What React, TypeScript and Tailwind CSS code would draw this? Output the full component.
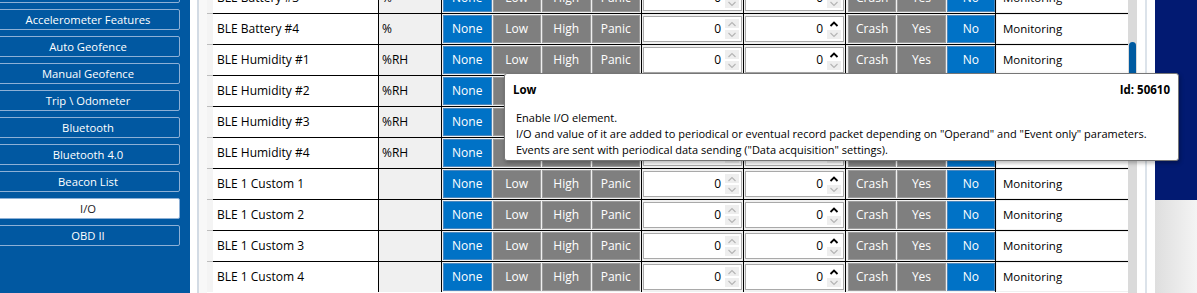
import React from "react"

const MENU = [
  "Features",
  "Accelerometer Features",
  "Auto Geofence",
  "Manual Geofence",
  "Trip \\ Odometer",
  "Bluetooth",
  "Bluetooth 4.0",
  "Beacon List",
  "I/O",
  "OBD II",
]

const ROWS = [
  { name: "BLE Battery #3", unit: "%" },
  { name: "BLE Battery #4", unit: "%" },
  { name: "BLE Humidity #1", unit: "%RH" },
  { name: "BLE Humidity #2", unit: "%RH" },
  { name: "BLE Humidity #3", unit: "%RH" },
  { name: "BLE Humidity #4", unit: "%RH" },
  { name: "BLE 1 Custom 1", unit: "" },
  { name: "BLE 1 Custom 2", unit: "" },
  { name: "BLE 1 Custom 3", unit: "" },
  { name: "BLE 1 Custom 4", unit: "" },
]

function Caret({ down = false, dark = false }: { down?: boolean; dark?: boolean }) {
  return (
    <svg width="10" height="6" viewBox="0 0 10 6" className={down ? "rotate-180" : ""}>
      <path
        d="M1.5 5 L5 1.5 L8.5 5"
        fill="none"
        stroke={dark ? "#000" : "#b5b5b5"}
        strokeWidth={dark ? 1.8 : 1.2}
      />
    </svg>
  )
}

function NumBox({ activeUp = false }: { activeUp?: boolean }) {
  return (
    <div className="h-[26px] flex-1 bg-white border border-[#a9a9a9] flex items-center justify-end">
      <span className="text-[12px] text-black mr-[4px]">0</span>
      <div className="flex flex-col gap-[2px] mr-[2px] w-[14px]">
        <div className={activeUp ? "h-[9px] flex items-center justify-center" : "h-[9px] bg-[#eeeeee] flex items-center justify-center"}>
          <Caret dark={activeUp} />
        </div>
        <div className="h-[9px] bg-[#eeeeee] flex items-center justify-center">
          <Caret down />
        </div>
      </div>
    </div>
  )
}

function Seg({ label, on }: { label: string; on?: boolean }) {
  return (
    <div
      className={
        on
          ? "flex-1 bg-[#0072c6] border border-[#4a88bf] text-white text-[12px] flex items-center justify-center"
          : "flex-1 bg-[#7f7f7f] border border-[#9b9b9b] text-white text-[12px] flex items-center justify-center"
      }
    >
      {label}
    </div>
  )
}

export default function App() {
  return (
    <div className="relative w-[1197px] h-[293px] overflow-hidden flex bg-white font-['Open_Sans',sans-serif]">
      {/* menu */}
      <div className="w-[190px] shrink-0 bg-[#0158a1] overflow-hidden">
        <div className="mt-[-18px] flex flex-col gap-[6px]">
          {MENU.map((m) => (
            <div
              key={m}
              className={
                m === "I/O"
                  ? "ml-[-4px] w-[184px] h-[21px] rounded-[2px] border border-[#8db0d6] bg-white text-[#1a1a1a] text-[11.25px] leading-[19px] text-center"
                  : "ml-[-4px] w-[184px] h-[21px] rounded-[2px] border border-[#8db0d6] text-white text-[11.25px] leading-[19px] text-center"
              }
            >
              {m}
            </div>
          ))}
        </div>
      </div>

      {/* gutter */}
      <div className="w-[17px] shrink-0 flex">
        <div className="w-[7px] bg-white" />
        <div className="w-[2px] bg-[#d3dbe4]" />
        <div className="flex-1 bg-[#f8f8f8]" />
      </div>

      {/* table */}
      <div className="w-[921px] shrink-0 overflow-hidden">
        <div className="mt-[-18px] flex flex-col">
          {ROWS.map((r) => (
            <div key={r.name} className="h-[31px] flex">
              <div className="w-[6px] border-t border-[#bdbdbd] bg-[#f4f4f4]" />
              <div className="flex flex-1 border-t border-black">
                <div className="w-[165px] bg-white pl-[4px] text-[12px] text-black flex items-center">{r.name}</div>
                <div className="w-[63px] border-l border-black bg-[#f0f0f0] pl-[3px] text-[12px] text-black flex items-center">
                  {r.unit}
                </div>
                <div className="w-[200px] border-l border-black bg-[#f0f0f0] flex gap-px p-[1px]">
                  <Seg label="None" on />
                  <Seg label="Low" />
                  <Seg label="High" />
                  <Seg label="Panic" />
                </div>
                <div className="w-[102px] border-l border-black bg-[#f0f0f0] flex items-center px-[1px]">
                  <NumBox />
                </div>
                <div className="w-[102px] border-l border-black bg-[#f0f0f0] flex items-center px-[1px]">
                  <NumBox activeUp />
                </div>
                <div className="w-[150px] border-l border-black bg-[#f0f0f0] flex gap-px py-[1px] pl-[2px]">
                  <Seg label="Crash" />
                  <Seg label="Yes" />
                  <Seg label="No" on />
                </div>
                <div className="w-[133px] border-l border-black bg-[#f0f0f0] pl-[1px] py-[1px] flex">
                  <div className="flex-1 bg-white pl-[6px] text-[11.5px] text-black flex items-center">Monitoring</div>
                </div>
              </div>
            </div>
          ))}
        </div>
      </div>

      {/* scrollbar */}
      <div className="w-[9px] shrink-0 bg-[#dadada] pt-[42px] flex justify-center">
        <div className="w-[7px] h-[110px] rounded-full bg-[#005ba1]" />
      </div>

      {/* right side */}
      <div className="w-[8px] shrink-0 bg-white" />
      <div className="w-[2px] shrink-0 bg-[#dce3ea]" />
      <div className="w-[8px] shrink-0 bg-white" />
      <div className="flex-1 flex flex-col">
        <div className="h-[200px] bg-[#021a72]" />
        <div className="flex-1 bg-gradient-to-r from-[#dedede] to-[#f4f4f4]" />
      </div>

      {/* tooltip */}
      <div className="absolute left-[504px] top-[73px] w-[675px] h-[88px] bg-white border border-[#767676] rounded-[3px] shadow-[1px_2px_4px_rgba(0,0,0,0.3)] text-[11px] text-black">
        <div className="flex justify-between px-[8px] pt-[8px] leading-[16px] font-bold text-[11.5px]">
          <span>Low</span>
          <span>Id: 50610</span>
        </div>
        <div className="pl-[11px] mt-[12px] leading-[16px]">
          <p>Enable I/O element.</p>
          <p>I/O and value of it are added to periodical or eventual record packet depending on "Operand" and "Event only" parameters.</p>
          <p>Events are sent with periodical data sending ("Data acquisition" settings).</p>
        </div>
      </div>
    </div>
  )
}
